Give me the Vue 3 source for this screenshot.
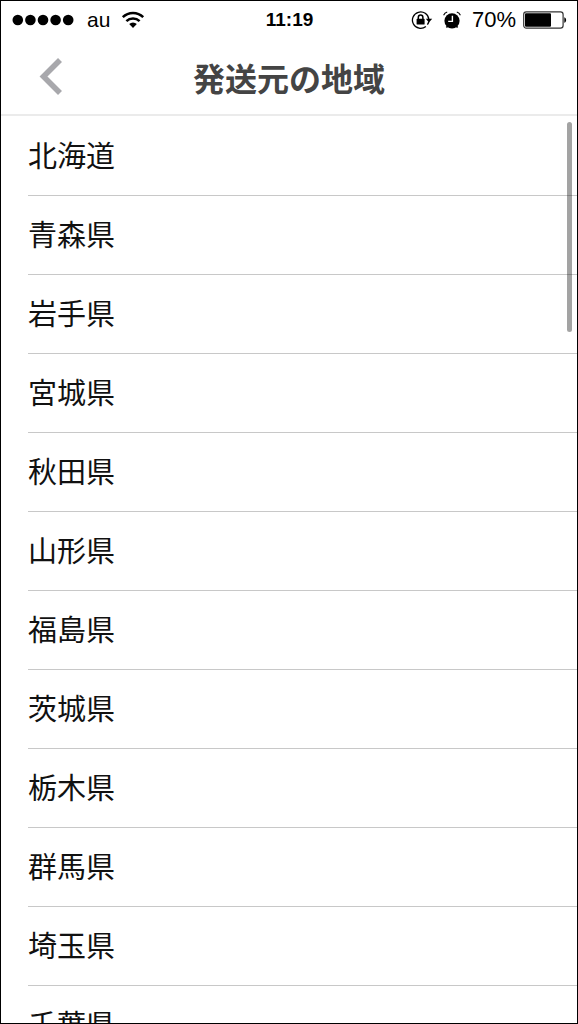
<script setup>
import { ref } from 'vue'

const prefectures = [
  '北海道', '青森県', '岩手県', '宮城県', '秋田県', '山形県', '福島県',
  '茨城県', '栃木県', '群馬県', '埼玉県', '千葉県',
]
const selected = ref('')
</script>

<template>
  <div class="screen">
    <div class="status">
      <div class="carrier">
        <svg class="signal" width="62" height="12" viewBox="0 0 62 12" aria-hidden="true">
          <circle v-for="n in 5" :key="n" :cx="n * 12.6 - 6.8" cy="6" r="5.3" />
        </svg>
        <span>au</span>
        <svg class="wifi" width="24" height="18" viewBox="0 0 24 18" aria-hidden="true">
          <path d="M1.8 6.2a14.5 14.5 0 0 1 20.4 0M5.4 10.1a9.4 9.4 0 0 1 13.2 0" fill="none" stroke="#000" stroke-width="2.5" />
          <path d="M12 17l-3.8-3.9a5.4 5.4 0 0 1 7.6 0z" />
        </svg>
      </div>
      <time class="clock">11:19</time>
      <div class="indicators">
        <svg class="lock" width="22" height="20" viewBox="0 0 22 20" aria-hidden="true">
          <path d="M14.9 16.4A8.2 8.2 0 1 1 17.8 9.4" fill="none" stroke="#000" stroke-width="1.3" />
          <path d="M17.8 11.5a8.2 8.2 0 0 1-1.4 3.2" fill="none" stroke="#000" stroke-width="1.3" />
          <path d="M14.8 8.8h6.4L18 12.6z" />
          <rect x="5.6" y="8.8" width="8" height="5.8" rx=".6" />
          <path d="M7.3 9V7.4a2.3 2.3 0 0 1 4.6 0V9" fill="none" stroke="#000" stroke-width="1.5" />
        </svg>
        <svg class="alarm" width="18" height="18" viewBox="0 0 18 18" aria-hidden="true">
          <circle cx="9" cy="9.8" r="7.6" />
          <path d="M4.3 15.4l-.9 1.2M13.7 15.4l.9 1.2" stroke="#000" stroke-width="1.6" />
          <path d="M.6 4.2A6 6 0 0 1 4.2 1M17.4 4.2A6 6 0 0 0 13.8 1" fill="none" stroke="#000" stroke-width="1.1" />
          <path d="M9.4 4.8v5.6H5.2" fill="none" stroke="#fff" stroke-width="1.4" />
        </svg>
        <span class="percent">70%</span>
        <svg class="battery" width="44" height="18" viewBox="0 0 44 18" aria-hidden="true">
          <rect x=".7" y=".9" width="39.4" height="16.2" rx="2.6" fill="#fff" stroke="#333" stroke-width="1.2" />
          <rect x="2" y="2.3" width="26" height="13.4" rx="1" />
          <path d="M41.3 6.2c2.4.6 2.4 5 0 5.6z" />
        </svg>
      </div>
    </div>

    <header class="bar">
      <button class="back" type="button" aria-label="戻る">
        <svg width="24" height="40" viewBox="0 0 24 40" aria-hidden="true">
          <path d="M21 3L4.5 19.500L21 36" fill="none" stroke="#a8a8ac" stroke-width="5.6" />
        </svg>
      </button>
      <h1>発送元の地域</h1>
    </header>

    <main class="content">
      <ul class="list">
        <li v-for="name in prefectures" :key="name">
          <button type="button" :aria-pressed="selected === name" @click="selected = name">{{ name }}</button>
        </li>
      </ul>
      <div class="thumb" aria-hidden="true"></div>
    </main>
  </div>
</template>

<style>
body {
  margin: 0;
  background: #fff;
}
</style>

<style scoped>
.screen {
  box-sizing: border-box;
  height: 100vh;
  display: flex;
  flex-direction: column;
  overflow: hidden;
  border: 1px solid #000;
  background: #fff;
  color: #111;
  font-family: "Liberation Sans", "Noto Sans CJK JP", sans-serif;
}

.status {
  display: grid;
  grid-template-columns: 1fr auto 1fr;
  align-items: center;
  height: 38px;
  flex: none;
  padding: 0 10px 0 11px;
  font-size: 21px;
  line-height: 24px;
  color: #000;
}

.carrier,
.indicators {
  display: flex;
  align-items: center;
}

.signal {
  margin-right: 13px;
}

.wifi {
  margin-left: 11px;
}

.clock {
  font-weight: 700;
  font-size: 19px;
}

.indicators {
  justify-content: flex-end;
}

.alarm {
  margin: 0 11px 0 10px;
}

.percent {
  font-size: 22px;
}

.battery {
  margin-left: 7px;
}

.bar {
  display: grid;
  grid-template-columns: 100px 1fr 100px;
  align-items: center;
  height: 75px;
  flex: none;
  border-bottom: 2px solid #ebebeb;
}

.back {
  display: flex;
  justify-content: center;
  padding: 0;
  border: 0;
  background: none;
}

h1 {
  margin: 0;
  text-align: center;
  font-family: "Noto Sans CJK JP", sans-serif;
  font-size: 32px;
  line-height: 48px;
  font-weight: 700;
  color: #444;
}

.content {
  position: relative;
  flex: 1;
  min-height: 0;
  overflow: hidden;
}

.list {
  margin: 0;
  padding: 1px 0 0 27px;
  list-style: none;
}

.list li {
  border-bottom: 1px solid #c8c8c8;
}

.list button {
  display: block;
  width: 100%;
  height: 78px;
  padding: 0 0 4px;
  border: 0;
  background: none;
  color: #111;
  text-align: left;
  font-family: "Noto Sans CJK JP", sans-serif;
  font-size: 29px;
  font-weight: 400;
  line-height: 44px;
}

.thumb {
  position: absolute;
  top: 6px;
  right: 5px;
  width: 5px;
  height: 210px;
  border-radius: 3px;
  background: rgba(0, 0, 0, 0.36);
}
</style>
